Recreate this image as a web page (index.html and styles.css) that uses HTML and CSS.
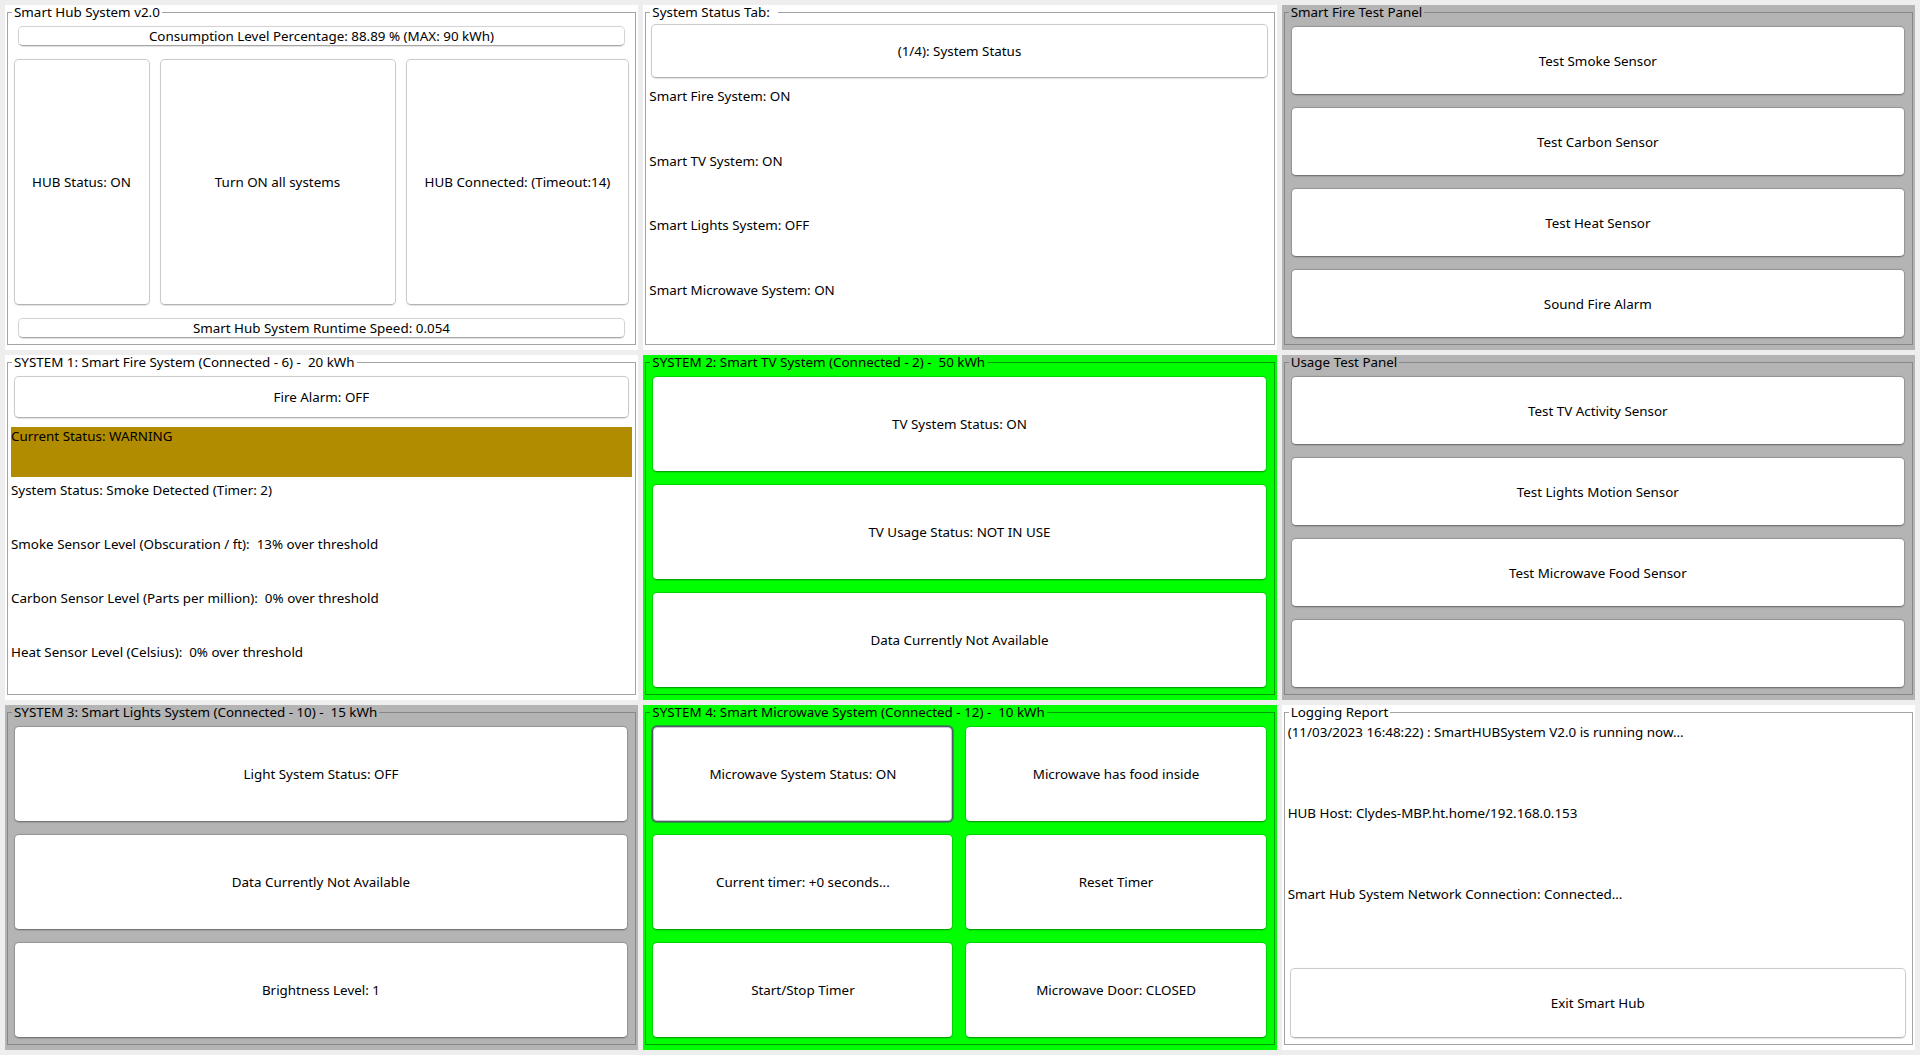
FILE: index.html
```html
<!DOCTYPE html>
<html lang="en">
<head>
<meta charset="utf-8">
<title>Smart Hub System v2.0</title>
<link rel="stylesheet" href="styles.css">
</head>
<body>
<main class="hub">

  <section class="panel white">
    <fieldset class="box">
      <legend>Smart Hub System v2.0</legend>
      <div class="hub-main">
        <button class="btn thin">Consumption Level Percentage: 88.89 % (MAX: 90 kWh)</button>
        <div class="big-row">
          <button class="btn soft">HUB Status: ON</button>
          <button class="btn soft">Turn ON all systems</button>
          <button class="btn soft">HUB Connected: (Timeout:14)</button>
        </div>
        <button class="btn thin thin-last">Smart Hub System Runtime Speed: 0.054</button>
      </div>
    </fieldset>
  </section>

  <section class="panel white">
    <fieldset class="box">
      <legend class="legend-wide">System Status Tab:</legend>
      <div class="rows rows5">
        <button class="btn soft tab-btn">(1/4): System Status</button>
        <div class="lbl lbl-tight">Smart Fire System: ON</div>
        <div class="lbl lbl-tight">Smart TV System: ON</div>
        <div class="lbl lbl-tight">Smart Lights System: OFF</div>
        <div class="lbl lbl-tight">Smart Microwave System: ON</div>
      </div>
    </fieldset>
  </section>

  <section class="panel gray">
    <fieldset class="box">
      <legend>Smart Fire Test Panel</legend>
      <div class="stack stack4">
        <button class="btn">Test Smoke Sensor</button>
        <button class="btn">Test Carbon Sensor</button>
        <button class="btn">Test Heat Sensor</button>
        <button class="btn">Sound Fire Alarm</button>
      </div>
    </fieldset>
  </section>

  <section class="panel white">
    <fieldset class="box">
      <legend>SYSTEM 1: Smart Fire System (Connected - 6) -  20 kWh</legend>
      <div class="rows rows6">
        <button class="btn soft alarm-btn">Fire Alarm: OFF</button>
        <div class="lbl warn">Current Status: WARNING</div>
        <div class="lbl">System Status: Smoke Detected (Timer: 2)</div>
        <div class="lbl">Smoke Sensor Level (Obscuration / ft):  13% over threshold</div>
        <div class="lbl">Carbon Sensor Level (Parts per million):  0% over threshold</div>
        <div class="lbl">Heat Sensor Level (Celsius):  0% over threshold</div>
      </div>
    </fieldset>
  </section>

  <section class="panel green">
    <fieldset class="box">
      <legend>SYSTEM 2: Smart TV System (Connected - 2) -  50 kWh</legend>
      <div class="stack stack3">
        <button class="btn">TV System Status: ON</button>
        <button class="btn">TV Usage Status: NOT IN USE</button>
        <button class="btn">Data Currently Not Available</button>
      </div>
    </fieldset>
  </section>

  <section class="panel gray">
    <fieldset class="box">
      <legend>Usage Test Panel</legend>
      <div class="stack stack4">
        <button class="btn">Test TV Activity Sensor</button>
        <button class="btn">Test Lights Motion Sensor</button>
        <button class="btn">Test Microwave Food Sensor</button>
        <button class="btn"></button>
      </div>
    </fieldset>
  </section>

  <section class="panel gray">
    <fieldset class="box">
      <legend>SYSTEM 3: Smart Lights System (Connected - 10) -  15 kWh</legend>
      <div class="stack stack3 stack-left">
        <button class="btn">Light System Status: OFF</button>
        <button class="btn">Data Currently Not Available</button>
        <button class="btn">Brightness Level: 1</button>
      </div>
    </fieldset>
  </section>

  <section class="panel green">
    <fieldset class="box">
      <legend>SYSTEM 4: Smart Microwave System (Connected - 12) -  10 kWh</legend>
      <div class="stack grid6">
        <button class="btn focused">Microwave System Status: ON</button>
        <button class="btn">Microwave has food inside</button>
        <button class="btn">Current timer: +0 seconds...</button>
        <button class="btn">Reset Timer</button>
        <button class="btn">Start/Stop Timer</button>
        <button class="btn">Microwave Door: CLOSED</button>
      </div>
    </fieldset>
  </section>

  <section class="panel white">
    <fieldset class="box">
      <legend>Logging Report</legend>
      <div class="rows rows4">
        <div class="lbl">(11/03/2023 16:48:22) : SmartHUBSystem V2.0 is running now...</div>
        <div class="lbl">HUB Host: Clydes-MBP.ht.home/192.168.0.153</div>
        <div class="lbl">Smart Hub System Network Connection: Connected...</div>
        <button class="btn soft exit-btn">Exit Smart Hub</button>
      </div>
    </fieldset>
  </section>

</main>
</body>
</html>
```

FILE: styles.css
```css
* {
  box-sizing: border-box;
}

html,
body {
  margin: 0;
  padding: 0;
}

body {
  width: 1920px;
  height: 1055px;
  overflow: hidden;
  background: #eeeeee;
  color: #000;
  font-family: "Noto Sans", "DejaVu Sans", sans-serif;
  font-size: 13.4px;
}

.hub {
  display: grid;
  grid-template-columns: repeat(3, minmax(0, 1fr));
  grid-template-rows: repeat(3, minmax(0, 1fr));
  gap: 5px;
  padding: 5px;
  height: 1055px;
}

/* ---------- panels with titled borders ---------- */

.panel {
  display: flex;
  flex-direction: column;
  min-width: 0;
  min-height: 0;
  padding: 0 2px 5px;
}

.white { background: #ffffff; }
.gray  { background: #b4b4b4; }
.green { background: #00ff00; }

.box {
  flex: 1;
  display: flex;
  flex-direction: column;
  min-width: 0;
  min-height: 0;
  margin: 0;
  padding: 0 3px 1px;
  border: 1px solid #a4a4a4;
}

.gray .box  { border-color: #878787; }
.green .box { border-color: #009c00; }

legend {
  margin-left: 1px;
  padding: 0 2px;
  font-size: 13.4px;
  line-height: 14px;
  white-space: pre;
}

.legend-wide {
  padding-right: 8px;
}

/* ---------- buttons ---------- */

.btn {
  display: block;
  margin: 0;
  padding: 0;
  min-width: 0;
  font: inherit;
  color: #000;
  text-align: center;
  white-space: pre;
  background: #ffffff;
  background-clip: padding-box;
  border: 1px solid rgba(0, 0, 0, 0.07);
  border-bottom-color: rgba(0, 0, 0, 0.26);
  border-radius: 5px;
  box-shadow: 0 0.5px 1px rgba(0, 0, 0, 0.12);
  cursor: default;
}

.soft {
  border-color: rgba(0, 0, 0, 0.11);
  border-bottom-color: rgba(0, 0, 0, 0.2);
}

.focused {
  border: 1px solid #4f5b67;
  box-shadow: 0 0 0 1px rgba(70, 84, 98, 0.55), inset 0 0 0 1px rgba(70, 84, 98, 0.3);
}

/* ---------- hub main panel ---------- */

.hub-main {
  flex: 1;
  display: flex;
  flex-direction: column;
  min-height: 0;
}

.thin {
  height: 20px;
  flex: none;
  margin: 7px 7px 0 6.5px;
}

.thin-last {
  margin: 13px 7px 5px 6.5px;
}

.big-row {
  flex: 1;
  min-height: 0;
  margin-top: 13px;
  padding: 0 3px 0 2.5px;
  display: grid;
  grid-template-columns: 136px 236px minmax(0, 1fr);
  column-gap: 10px;
}

/* ---------- label rows ---------- */

.rows {
  flex: 1;
  min-height: 0;
  display: grid;
}

.rows4 { grid-template-rows: repeat(4, minmax(0, 1fr)); }
.rows5 { grid-template-rows: repeat(5, minmax(0, 1fr)); }
.rows6 { grid-template-rows: repeat(6, minmax(0, 1fr)); }

.lbl {
  padding-top: 5px;
  line-height: 16px;
  white-space: pre;
  overflow: hidden;
}

.lbl-tight {
  padding-top: 4px;
}

.warn {
  margin-top: 4px;
  padding-top: 1px;
  background: #b28c00;
}

.tab-btn   { margin: 5px 3px 6px 2px; }
.alarm-btn { margin: 7px 3px 5px 2.5px; }
.exit-btn  { margin: 6px 3px 5px 2px; }

/* ---------- stacked button panels ---------- */

.stack {
  flex: 1;
  min-height: 0;
  display: grid;
  row-gap: 12px;
  padding: 7px 4px 5px 3px;
}

.stack3 { grid-template-rows: repeat(3, minmax(0, 1fr)); }
.stack4 { grid-template-rows: repeat(4, minmax(0, 1fr)); }

.stack-left {
  padding-left: 2.5px;
}

.grid6 {
  grid-template-columns: repeat(2, minmax(0, 1fr));
  grid-template-rows: repeat(3, minmax(0, 1fr));
  column-gap: 12px;
}
```
